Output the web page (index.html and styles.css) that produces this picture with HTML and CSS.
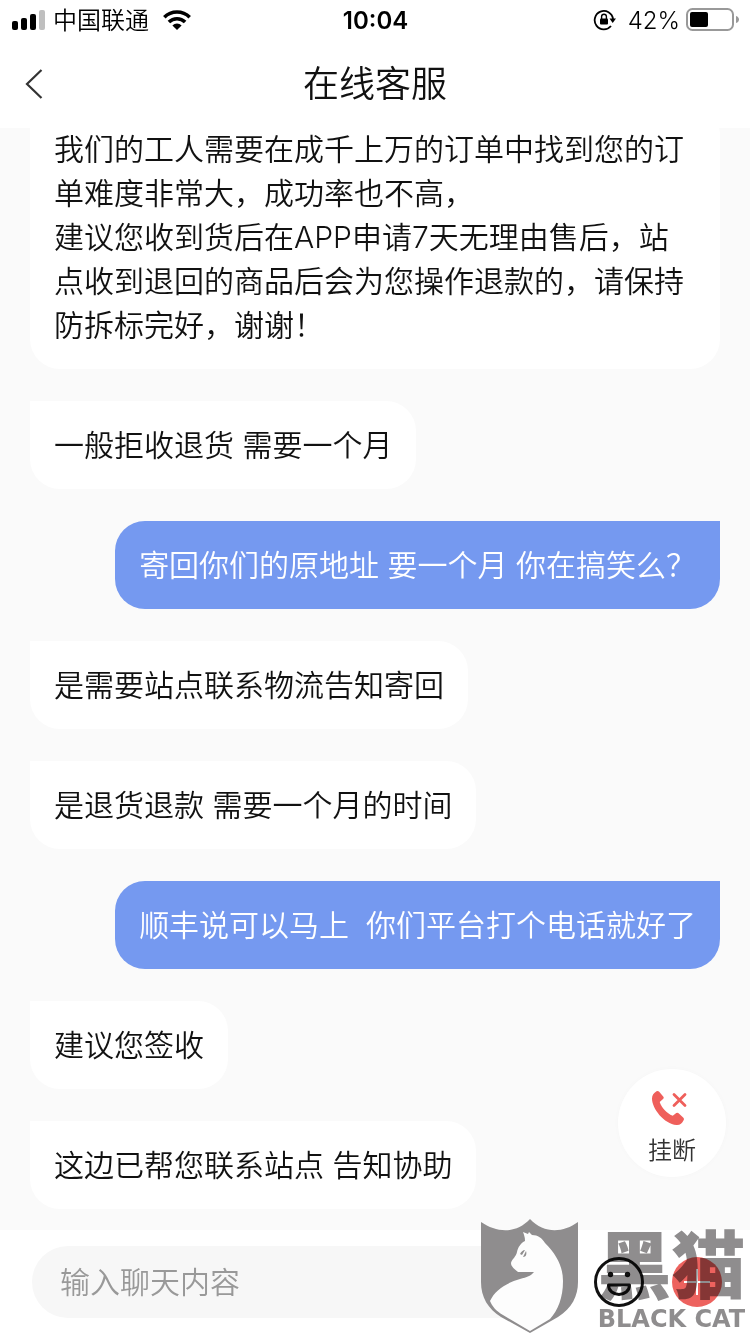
FILE: index.html
```html
<!doctype html>
<html lang="zh-CN">
	<head>
		<meta charset="utf-8" />
		<meta name="viewport" content="width=device-width, initial-scale=1" />
		<title>在线客服</title>

		<link rel="stylesheet" href="styles.css">
	</head>
	<body>
		<div class="status-bar">
			<div class="status-left">
				<svg class="signal" width="33" height="20" viewBox="0 0 33 20" aria-hidden="true">
					<rect x="0" y="11" width="6" height="9" rx="2" />
					<rect x="9" y="8" width="6" height="12" rx="2" />
					<rect x="18" y="4" width="6" height="16" rx="2" />
					<rect x="27" y="0" width="6" height="20" rx="2" fill="#bfbfbf" />
				</svg>
				<span>中国联通</span>
				<svg class="wifi" width="28" height="20" viewBox="0 0 28 20" aria-hidden="true">
					<g fill="none" stroke="#000" stroke-width="3.6">
						<path d="M1.3 7.2a18.2 18.2 0 0 1 25.4 0" />
						<path d="M5.9 12a11.6 11.6 0 0 1 16.2 0" />
					</g>
					<path d="M14 20l-4.6-4.6a6.6 6.6 0 0 1 9.2 0z" />
				</svg>
			</div>
			<time>10:04</time>
			<div class="status-right">
				<svg width="24" height="22" viewBox="0 0 24 22" aria-hidden="true">
					<path d="M19 17A9.200 9.200 0 1 1 21 10" fill="none" stroke="#000" stroke-width="1.800" />
					<path d="M17.500 9.500h6.500l-3.300 4.500z" />
					<rect x="8" y="9.400" width="8" height="6" rx="1" />
					<path d="M9.600 10V7.600a2.400 2.400 0 0 1 4.800 0V10" fill="none" stroke="#000" stroke-width="1.400" />
				</svg>
				<span>42%</span>
				<svg class="battery" width="53" height="24" viewBox="0 0 53 24" aria-hidden="true">
					<rect x="1" y="1" width="46" height="21" rx="5.500" fill="none" stroke="#999" stroke-width="2" />
					<rect x="4" y="4" width="18" height="15" rx="2" />
					<path d="M50 8c4 1 4 6 0 7z" fill="#999" />
				</svg>
			</div>
		</div>

		<header>
			<a href="#" class="back" aria-label="返回">
				<svg width="18" height="30" viewBox="0 0 18 30">
					<path d="M16.500 1L2 15l14.500 14" fill="none" stroke="#333" stroke-width="2.200" />
				</svg>
			</a>
			<h1>在线客服</h1>
		</header>

		<main>
			<div class="messages">
				<p class="message">我们的工人需要在成千上万的订单中找到您的订单难度非常大，成功率也不高，<br />建议您收到货后在APP申请7天无理由售后，站点收到退回的商品后会为您操作退款的，请保持防拆标完好，谢谢！</p>
				<p class="message">一般拒收退货 需要一个月</p>
				<p class="message mine">寄回你们的原地址 要一个月 你在搞笑么？</p>
				<p class="message">是需要站点联系物流告知寄回</p>
				<p class="message">是退货退款 需要一个月的时间</p>
				<p class="message mine">顺丰说可以马上  你们平台打个电话就好了</p>
				<p class="message">建议您签收</p>
				<p class="message">这边已帮您联系站点 告知协助</p>
			</div>
			<button type="button" class="hang-up">
				<svg width="42" height="36" viewBox="0 0 42 36" aria-hidden="true">
					<path d="M5.500 1.300Q7 .5 8.200 1.800l4.200 5q.8 1-.1 1.900l-3.600 3.200c2 5.800 6.800 11 13 13.900l3.600-2.700q1.200-.9 2.300.1l4.800 4.500q1.200 1.200.2 2.500c-1.500 2.800-3.500 5-7 4.800C13 34 1 18.500 1 8.500c0-3 1.700-5.500 4.500-7.200z" fill="#ef5f5b" />
					<path d="M23 4.500L34 15.500M34 4.500L23 15.500" stroke="#ef5f5b" stroke-width="2.800" stroke-linecap="round" />
				</svg>
				挂断
			</button>
		</main>

		<footer>
			<input type="text" placeholder="输入聊天内容" aria-label="输入聊天内容" />
			<button type="button" class="tool" aria-label="表情">
				<svg width="50" height="50" viewBox="0 0 50 50">
					<circle cx="25" cy="25" r="23.500" fill="none" stroke="#111" stroke-width="3" />
					<circle cx="16.500" cy="17.500" r="2.700" fill="#111" />
					<circle cx="33.500" cy="17.500" r="2.700" fill="#111" />
					<path d="M14.500 28h21c0 12.500-21 12.500-21 0z" fill="none" stroke="#111" stroke-width="3" stroke-linejoin="round" />
				</svg>
			</button>
			<button type="button" class="tool" aria-label="更多">
				<svg width="50" height="50" viewBox="0 0 50 50">
					<circle cx="25" cy="25" r="25" fill="#ed625e" />
					<path d="M12 25h26M25 12v26" stroke="#fff" stroke-width="2" />
				</svg>
			</button>
		</footer>

		<div class="watermark">
			<svg width="98" height="115" viewBox="0 0 98 115" aria-hidden="true">
				<path d="M0 3C16 14 35 15 49 0c14 15 33 14 48 3v60c0 14-6 26-20 35L49 114 20 98C7 90 0 78 0 63z" fill="#8f8d8e" />
				<path d="M42 13l5 2 1-2 3 3c6 0 10 3 13 8 12 12 18 24 18 38 0 17-5 29-13 38l-20 12L22 96C15 92 11 87 9 82c5-11 16-18 30-22 7-2 11-3 14-7H37c-3-3-7-5-7-9 1-4 5-6 6-11s4-9 8-11c0-4-1-6-2-9z" fill="#fdfdfd" />
				<path d="M39 35c1-2 3-4 5-4l-3 5zM42 38l3-6c1 3 0 6-3 6z" fill="#8f8d8e" />
			</svg>
			<div class="watermark-text">
				<span class="watermark-name">黑猫</span>
				<span class="watermark-latin">BLACK CAT</span>
			</div>
		</div>
	</body>
</html>
```

FILE: styles.css
```css
* {
	box-sizing: border-box;
}

html {
	--font-main: Inter, 'Noto Sans CJK SC', sans-serif;
	--color-fg: #111;
	--color-bg: #fff;
	--color-chat: #fafafa;
	--color-mine: #7599f0;
	--color-watermark: #8f8d8e;
}

body {
	position: relative;
	display: flex;
	flex-direction: column;
	height: 100vh;
	margin: 0;
	overflow: hidden;
	font-family: var(--font-main);
	font-weight: 350;
	background: var(--color-bg);
	color: var(--color-fg);
}

svg {
	display: block;
	flex: none;
}

button,
input {
	font: inherit;
	border: none;
}

button {
	padding: 0;
	background: none;
}

/* status bar */
.status-bar {
	display: grid;
	grid-template-columns: 1fr auto 1fr;
	align-items: center;
	flex: none;
	height: 40px;
	padding: 0 11px 0 12px;
	font-size: 24px;
	line-height: 38px;
	color: #000;
}

.status-bar span,
.status-bar time {
	padding-top: 2px;
}

.status-bar time {
	font-weight: 600;
}

.status-left,
.status-right {
	display: flex;
	align-items: center;
	gap: 8px;
}

.status-left .wifi {
	margin-left: 6px;
}

.status-right {
	justify-content: flex-end;
	gap: 6px;
}

.status-right span {
	margin-left: 6px;
}

/* title */
header {
	display: grid;
	grid-template-columns: 1fr auto 1fr;
	align-items: center;
	flex: none;
	height: 88px;
	padding: 0 25px;
}

h1 {
	margin: 0;
	font-size: 36px;
	font-weight: inherit;
	line-height: 48px;
}

/* conversation, always scrolled to the latest message */
main {
	position: relative;
	flex: 1;
	min-height: 0;
	background: var(--color-chat);
}

.messages {
	display: flex;
	flex-direction: column;
	justify-content: flex-end;
	align-items: flex-start;
	gap: 32px;
	height: 100%;
	padding: 0 30px 21px;
	overflow: hidden;
}

.message {
	flex: none;
	max-width: 100%;
	margin: 0;
	padding: 22px 24px;
	border-radius: 0 30px 30px 30px;
	background: var(--color-bg);
	font-size: 30px;
	line-height: 44px;
	white-space: pre-wrap;
}

.message.mine {
	align-self: flex-end;
	border-radius: 30px 0 30px 30px;
	background: var(--color-mine);
	color: #fff;
}

.hang-up {
	position: absolute;
	right: 24px;
	bottom: 53px;
	display: flex;
	flex-direction: column;
	align-items: center;
	justify-content: center;
	gap: 9px;
	width: 108px;
	height: 108px;
	padding-top: 10px;
	border-radius: 50%;
	background: var(--color-bg);
	box-shadow: 0 0 6px rgba(0, 0, 0, 0.02);
	color: #333;
	font-size: 24px;
	line-height: 32px;
}

/* input row */
footer {
	display: flex;
	align-items: center;
	flex: none;
	gap: 28px;
	height: 104px;
	padding: 0 28px 0 32px;
}

footer input {
	flex: 1;
	min-width: 0;
	height: 72px;
	padding: 0 28px;
	border-radius: 36px;
	background: #f7f7f7;
	font-size: 30px;
}

footer input::placeholder {
	color: #999;
	opacity: 1;
}

/* watermark over the bottom right corner */
.watermark {
	position: absolute;
	right: 2px;
	bottom: 0;
	display: flex;
	align-items: flex-end;
	gap: 16px;
	color: var(--color-watermark);
	pointer-events: none;
}

/* lets the input row's icons show through the lettering */
.watermark-text {
	display: flex;
	flex-direction: column;
	align-items: center;
	min-width: 153px;
	padding-bottom: 1px;
	mix-blend-mode: multiply;
}

.watermark-name {
	font-family: 'Noto Sans CJK SC', sans-serif;
	font-size: 74px;
	font-weight: 900;
	line-height: 88px;
}

.watermark-latin {
	font-family: 'DejaVu Sans', sans-serif;
	font-size: 24px;
	font-weight: 700;
	line-height: 28px;
}
```
